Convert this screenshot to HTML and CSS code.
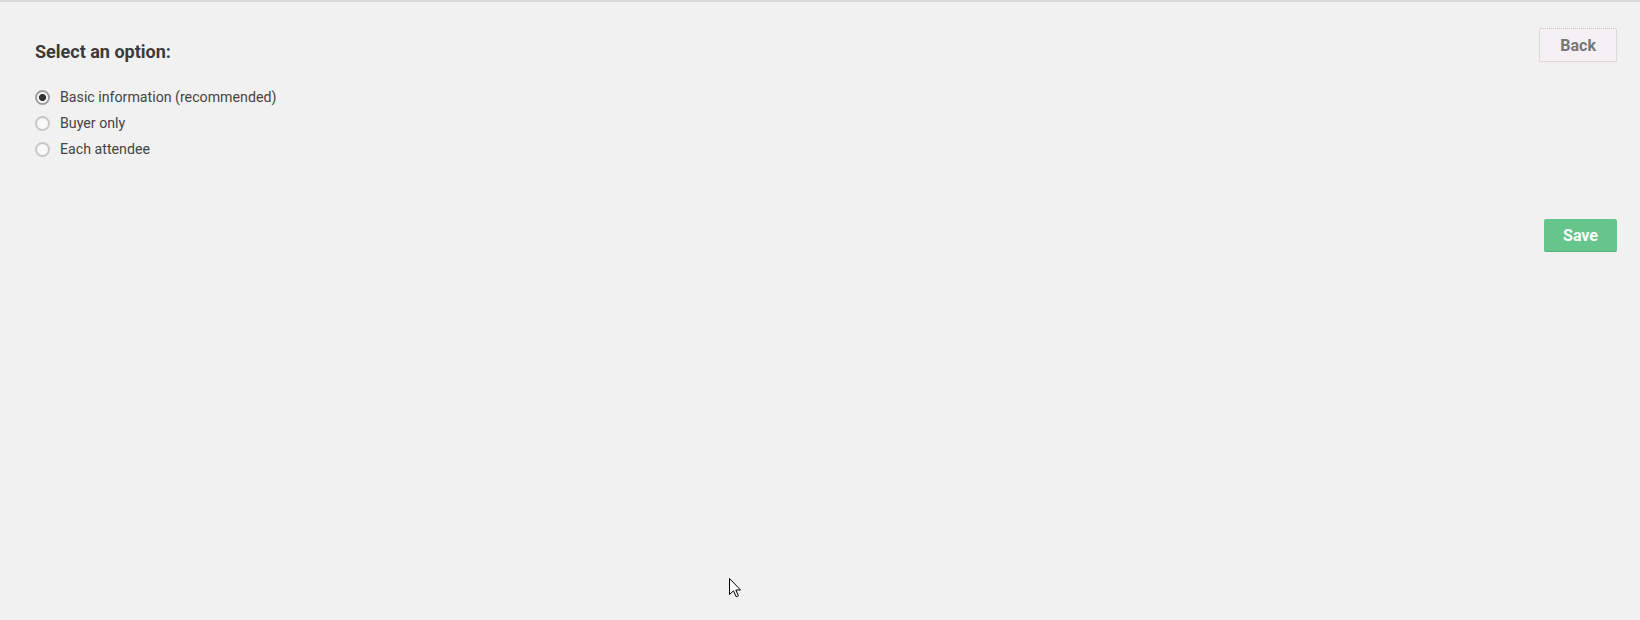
FILE: index.html
```html
<!DOCTYPE html>
<html lang="en">
<head>
<meta charset="utf-8">
<title>Select an option</title>
<link rel="stylesheet" href="styles.css">
</head>
<body>
<div class="page">
  <div class="main">
    <h2 class="title">Select an option:</h2>
    <div class="options">
      <label class="option"><input type="radio" name="opt" class="radio" checked><span>Basic information (recommended)</span></label>
      <label class="option"><input type="radio" name="opt" class="radio"><span>Buyer only</span></label>
      <label class="option"><input type="radio" name="opt" class="radio"><span>Each attendee</span></label>
    </div>
  </div>
  <div class="actions">
    <button class="btn btn-back">Back</button>
    <button class="btn btn-save">Save</button>
  </div>
</div>
<svg class="cursor" width="13" height="20" viewBox="0 0 13 20"><path d="M0.5 0.5 L0.5 16.5 L4.5 12.8 L7.2 18.8 L9.4 17.8 L6.8 12 L11.5 12 Z" fill="#fff" stroke="#000" stroke-width="1" stroke-linejoin="miter"/></svg>
</body>
</html>
```

FILE: styles.css
```css
html, body {
  margin: 0;
  padding: 0;
}
body {
  background: #f1f1f1;
  border-top: 2px solid #d9d9d9;
  height: 618px;
  font-family: Roboto, "Liberation Sans", Arial, sans-serif;
  position: relative;
  overflow: hidden;
}
.page {
  display: flex;
  justify-content: space-between;
  align-items: flex-start;
  padding: 26px 23px 0 35px;
}
.title {
  margin: 12px 0 0;
  font-size: 18px;
  line-height: 24px;
  font-weight: 700;
  color: #3a3a3a;
}
.options {
  margin-top: 20px;
  display: flex;
  flex-direction: column;
}
.option {
  display: flex;
  align-items: center;
  height: 26px;
  font-size: 14.2px;
  color: #444;
}
.radio {
  appearance: none;
  -webkit-appearance: none;
  margin: 0 10px 0 0;
  width: 15px;
  height: 15px;
  border: 2px solid #c6c6c6;
  border-radius: 50%;
  background: #f8f8f8;
  flex: none;
}
.radio:checked {
  border-color: #9e9e9e;
  background: radial-gradient(circle, #333 0 3.2px, #f8f8f8 3.9px);
}
.actions {
  display: flex;
  flex-direction: column;
  align-items: flex-end;
  gap: 157px;
}
.btn {
  font-family: Roboto, "Liberation Sans", Arial, sans-serif;
  font-weight: 700;
  font-size: 16px;
  border-radius: 2px;
  cursor: pointer;
}
.btn-back {
  height: 34px;
  padding: 0 20px;
  background: #f5f0f3;
  border: 1px dotted #c2c2c2;
  color: #777;
}
.btn-save {
  height: 33px;
  padding: 0 19px;
  background: #66c58b;
  border: none;
  border-bottom: 1px solid #5bb57f;
  color: #fff;
}
.cursor {
  position: absolute;
  left: 729px;
  top: 576px;
}
```
